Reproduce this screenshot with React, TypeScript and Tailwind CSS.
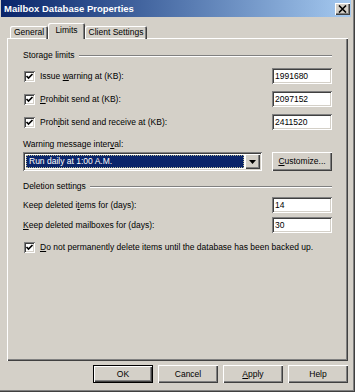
import React from "react";

const raised =
  "bg-[#d4d0c8] shadow-[inset_1px_1px_0_#ffffff,inset_-1px_-1px_0_#404040,inset_-2px_-2px_0_#808080]";
const sunken =
  "bg-white shadow-[inset_1px_1px_0_#808080,inset_-1px_-1px_0_#ffffff,inset_2px_2px_0_#404040,inset_-2px_-2px_0_#d4d0c8]";

function CheckBox() {
  return (
    <div className={`w-[11px] h-[11px] shrink-0 flex items-center justify-center ${sunken}`}>
      <svg width="11" height="11" viewBox="0 0 11 11">
        <polyline points="2.5,5 4.5,7 8.5,3" fill="none" stroke="#000" strokeWidth="1.7" />
      </svg>
    </div>
  );
}

function TextBox({ value }: { value: string }) {
  return (
    <div className={`w-[60px] h-[16px] flex items-center pl-[3px] ${sunken}`}>
      <span className="leading-none">{value}</span>
    </div>
  );
}

function GroupLabel({ text, className = "" }: { text: string; className?: string }) {
  return (
    <div className={`h-[11px] flex items-center gap-[4px] ${className}`}>
      <span className="leading-none whitespace-nowrap">{text}</span>
      <div className="flex-1 flex flex-col">
        <div className="h-px bg-[#808080]" />
        <div className="h-px bg-white" />
      </div>
    </div>
  );
}

function CheckRow({ label, value }: { label: React.ReactNode; value: string }) {
  return (
    <div className="h-[16px] flex items-center justify-between mt-[7px]">
      <div className="flex items-center gap-[5px] pl-[1px]">
        <CheckBox />
        <span className="leading-none">{label}</span>
      </div>
      <TextBox value={value} />
    </div>
  );
}

function Button({ children, def = false }: { children: React.ReactNode; def?: boolean }) {
  return (
    <div
      className={`w-[60px] h-[18px] flex items-center justify-center ${
        def
          ? "bg-[#d4d0c8] shadow-[inset_0_0_0_1px_#000000,inset_2px_2px_0_#ffffff,inset_-2px_-2px_0_#404040,inset_-3px_-3px_0_#808080]"
          : raised
      }`}
    >
      <span className="leading-none">{children}</span>
    </div>
  );
}

export default function App() {
  return (
    <div
      className="w-[355px] h-[392px] bg-[#d4d0c8] text-black text-[8.5px] flex flex-col pl-[1px] pr-[4px] shadow-[inset_-1px_-1px_0_#404040,inset_-2px_-2px_0_#808080] overflow-hidden"
      style={{ fontFamily: '"Liberation Sans", Arial, sans-serif' }}
    >
      {/* Title bar */}
      <div className="h-[17px] shrink-0 flex items-center justify-between pl-[3px] pr-[1px] bg-linear-to-r from-[#0a246a] to-[#a6caf0]">
        <span className="text-white font-bold text-[9.5px] leading-none">Mailbox Database Properties</span>
        <div className={`w-[15px] h-[12px] flex items-center justify-center ${raised}`}>
          <svg width="9" height="8" viewBox="0 0 9 8">
            <path d="M1 0.5 L8 7.5 M8 0.5 L1 7.5" stroke="#000" strokeWidth="1.6" />
          </svg>
        </div>
      </div>

      {/* Tabs */}
      <div className="flex items-end pl-[9px] mt-[6px] h-[16px] relative z-10 -mb-px">
        <div className="w-[38px] h-[13px] rounded-t-[2px] flex items-center justify-center shadow-[inset_1px_1px_0_#ffffff,inset_-1px_0_0_#404040,inset_-2px_0_0_#808080]">
          <span className="leading-none">General</span>
        </div>
        <div className="w-[37px] h-[16px] rounded-t-[2px] bg-[#d4d0c8] flex items-center justify-center pb-[2px] shadow-[inset_1px_1px_0_#ffffff,inset_-1px_0_0_#404040,inset_-2px_0_0_#808080]">
          <span className="leading-none">Limits</span>
        </div>
        <div className="w-[62px] h-[13px] rounded-t-[2px] flex items-center justify-center shadow-[inset_1px_1px_0_#ffffff,inset_-1px_0_0_#404040,inset_-2px_0_0_#808080]">
          <span className="leading-none">Client Settings</span>
        </div>
      </div>

      {/* Panel */}
      <div className="ml-[6px] w-[341px] h-[323px] shrink-0 pl-[16px] pr-[16px] flex flex-col shadow-[inset_1px_1px_0_#ffffff,inset_-1px_-1px_0_#404040,inset_-2px_-2px_0_#808080]">
        <GroupLabel text="Storage limits" className="mt-[12px]" />
        <CheckRow
          label={
            <>
              Issue <u>w</u>arning at (KB):
            </>
          }
          value="1991680"
        />
        <CheckRow
          label={
            <>
              <u>P</u>rohibit send at (KB):
            </>
          }
          value="2097152"
        />
        <CheckRow
          label={
            <>
              Proh<u>i</u>bit send and receive at (KB):
            </>
          }
          value="2411520"
        />

        <div className="h-[11px] flex items-center mt-[9px]">
          <span className="leading-none">
            Warning message inter<u>v</u>al:
          </span>
        </div>

        <div className="h-[19px] flex items-center justify-between mt-[2px]">
          <div className={`w-[239px] h-[19px] flex items-stretch p-[2px] ${sunken}`}>
            <div className="flex-1 m-[1px] bg-[#0a246a] border border-dotted border-[#b8b890] flex items-center pl-[2px]">
              <span className="leading-none text-white">Run daily at 1:00 A.M.</span>
            </div>
            <div className={`w-[15px] flex items-center justify-center ${raised}`}>
              <svg width="7" height="4" viewBox="0 0 7 4">
                <path d="M0 0 H7 L3.5 4 Z" fill="#000" />
              </svg>
            </div>
          </div>
          <div className={`w-[60px] h-[19px] flex items-center justify-center ${raised}`}>
            <span className="leading-none">
              <u>C</u>ustomize...
            </span>
          </div>
        </div>

        <GroupLabel text="Deletion settings" className="mt-[10px]" />

        <div className="h-[16px] flex items-center justify-between mt-[5px]">
          <span className="leading-none">
            Keep deleted i<u>t</u>ems for (days):
          </span>
          <TextBox value="14" />
        </div>
        <div className="h-[16px] flex items-center justify-between mt-[4px]">
          <span className="leading-none">
            <u>K</u>eep deleted mailboxes for (days):
          </span>
          <TextBox value="30" />
        </div>

        <div className="h-[13px] flex items-center gap-[5px] pl-[1px] mt-[8px]">
          <CheckBox />
          <span className="leading-none">
            <u>D</u>o not permanently delete items until the database has been backed up.
          </span>
        </div>
      </div>

      {/* Buttons */}
      <div className="flex justify-end gap-[5px] mt-[4px] w-[347px]">
        <Button def>OK</Button>
        <Button>Cancel</Button>
        <Button>
          <u>A</u>pply
        </Button>
        <Button>Help</Button>
      </div>
    </div>
  );
}
